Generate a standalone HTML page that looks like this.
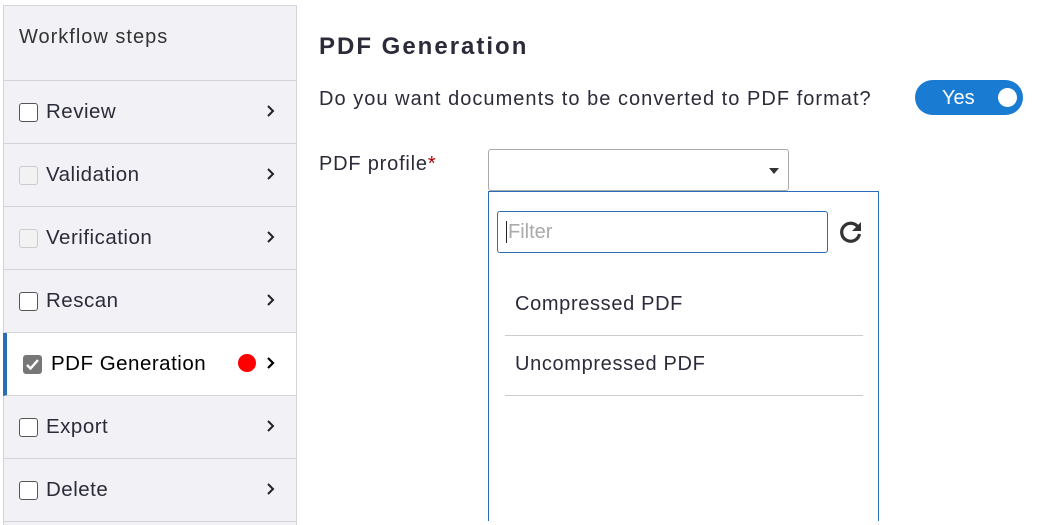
<!DOCTYPE html>
<html><head><style>
*{box-sizing:border-box;margin:0;padding:0}
body{width:1046px;height:513px;background:#fff;font-family:"Liberation Sans",sans-serif;color:#2b2b3a;position:relative;overflow:hidden}
.side{position:absolute;left:3px;top:5px;width:294px;height:520px;background:#f2f2f6;border:1px solid #d4d4d8;border-bottom:none}
.hdr{height:75px;border-bottom:1px solid #d4d4d8;padding:20px 0 0 15px;font-size:20px;color:#333;letter-spacing:1px}
.row{height:63px;border-bottom:1px solid #d4d4d8;position:relative;font-size:20.5px;display:flex;align-items:center;padding-left:15px;letter-spacing:0.5px}
.cb{width:19px;height:19px;border:1.5px solid #555;border-radius:3px;margin-right:8px;background:#fff}
.cb.dis{border-color:#ccc;background:#f2f2f2}
.row .txt{color:#2b2b3a}
.chev{position:absolute;right:20px;top:23px;width:10px;height:14px}
.active{background:#fff;border-left:4px solid #2a6db5;padding-left:16px;margin-left:-1px}
.active .txt{color:#000}
.dot{position:absolute;right:40px;top:21px;width:18px;height:18px;border-radius:50%;background:#f00}
</style></head><body>
<div class="side">
<div class="hdr">Workflow steps</div>
<div class="row"><div class="cb"></div><span class="txt">Review</span><svg class="chev" viewBox="0 0 10 14"><path d="M2 2l5 5-5 5" stroke="#222" stroke-width="2" fill="none"/></svg></div>
<div class="row"><div class="cb dis"></div><span class="txt">Validation</span><svg class="chev" viewBox="0 0 10 14"><path d="M2 2l5 5-5 5" stroke="#222" stroke-width="2" fill="none"/></svg></div>
<div class="row"><div class="cb dis"></div><span class="txt">Verification</span><svg class="chev" viewBox="0 0 10 14"><path d="M2 2l5 5-5 5" stroke="#222" stroke-width="2" fill="none"/></svg></div>
<div class="row"><div class="cb"></div><span class="txt">Rescan</span><svg class="chev" viewBox="0 0 10 14"><path d="M2 2l5 5-5 5" stroke="#222" stroke-width="2" fill="none"/></svg></div>
<div class="row active"><svg width="19" height="19" style="margin-right:9px"><rect width="19" height="19" rx="3" fill="#777"/><path d="M4 10l3.5 3.5L15 5" stroke="#fff" stroke-width="2.4" fill="none"/></svg><span class="txt">PDF Generation</span><div class="dot"></div><svg class="chev" viewBox="0 0 10 14"><path d="M2 2l5 5-5 5" stroke="#000" stroke-width="2.2" fill="none"/></svg></div>
<div class="row"><div class="cb"></div><span class="txt">Export</span><svg class="chev" viewBox="0 0 10 14"><path d="M2 2l5 5-5 5" stroke="#222" stroke-width="2" fill="none"/></svg></div>
<div class="row"><div class="cb"></div><span class="txt">Delete</span><svg class="chev" viewBox="0 0 10 14"><path d="M2 2l5 5-5 5" stroke="#222" stroke-width="2" fill="none"/></svg></div>
</div>
<div style="position:absolute;left:319px;top:33px;font-size:24px;font-weight:bold;color:#2b2b3a;letter-spacing:2px">PDF Generation</div>
<div style="position:absolute;left:319px;top:88px;font-size:20px;color:#2b2b3a;letter-spacing:1.03px">Do you want documents to be converted to PDF format?</div>
<div style="position:absolute;left:915px;top:80px;width:108px;height:35px;border-radius:18px;background:#1a7bd3;color:#fff;font-size:20px"><span style="position:absolute;left:27px;top:7px">Yes</span><div style="position:absolute;right:6px;top:8px;width:19px;height:19px;border-radius:50%;background:#fff"></div></div>
<div style="position:absolute;left:319px;top:153px;font-size:20px;color:#2b2b3a;letter-spacing:0.8px">PDF profile<span style="color:#a00">*</span></div>
<div style="position:absolute;left:488px;top:149px;width:301px;height:42px;border:1px solid #aaa;border-radius:3px"><div style="position:absolute;right:9px;top:18px;border-left:5px solid transparent;border-right:5px solid transparent;border-top:6px solid #333"></div></div>
<div style="position:absolute;left:488px;top:191px;width:391px;height:330px;border:1px solid #2a6db5;border-bottom:none">
<div style="position:absolute;left:8px;top:19px;width:331px;height:42px;border:1px solid #2a6db5;border-radius:3px;font-size:20px;color:#aaa;padding:9px 0 0 8px"><span style="border-left:1.5px solid #222;padding-left:1px">Filter</span></div>
<svg style="position:absolute;left:349px;top:27px" width="26" height="26" viewBox="0 0 26 26"><path d="M20 8A9 9 0 1 0 21.5 15" stroke="#333" stroke-width="3.2" fill="none"/><path d="M23 3v9h-9z" fill="#333"/></svg>
<div style="position:absolute;left:16px;top:143px;width:358px;border-top:1px solid #ccc"></div>
<div style="position:absolute;left:16px;top:203px;width:358px;border-top:1px solid #ccc"></div>
<div style="position:absolute;left:26px;top:101px;font-size:20px;color:#2b2b3a;letter-spacing:0.65px">Compressed PDF</div>
<div style="position:absolute;left:26px;top:161px;font-size:20px;color:#2b2b3a;letter-spacing:0.65px">Uncompressed PDF</div>
</div>
</body></html>
